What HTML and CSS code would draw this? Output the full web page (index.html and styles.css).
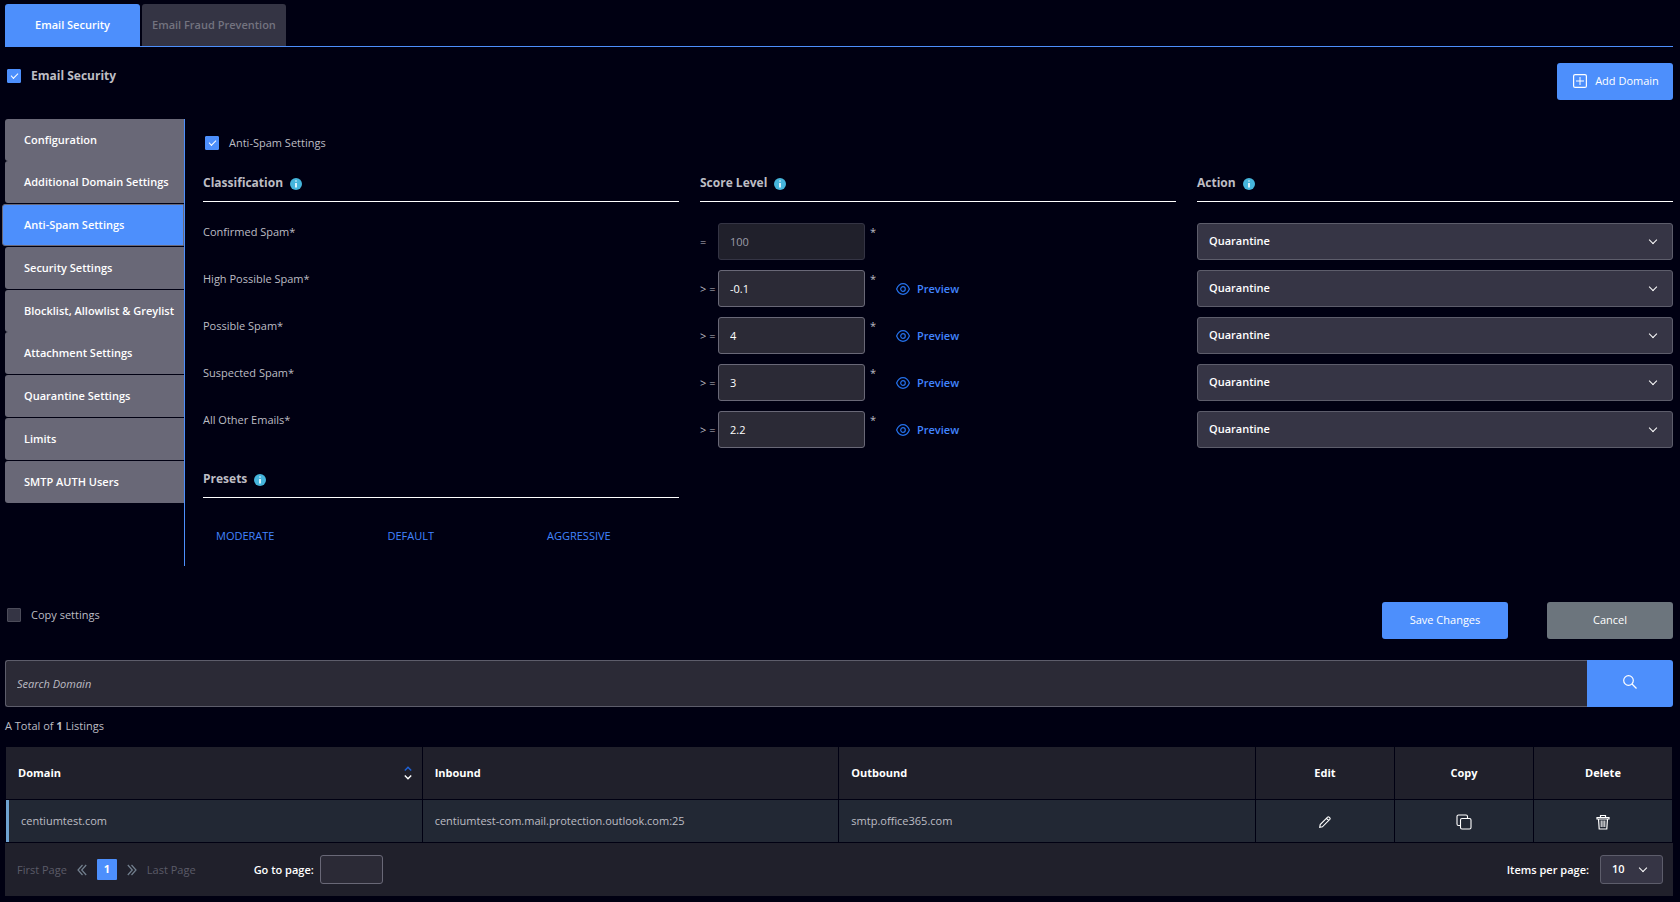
FILE: index.html
```html
<!DOCTYPE html>
<html lang="en">
<head>
  <meta charset="UTF-8">
  <meta name="viewport" content="width=device-width, initial-scale=1">
  <title>Email Security</title>
  <link rel="stylesheet" href="styles.css">
</head>
<body>

<!-- shared icons -->
<svg class="sprite" aria-hidden="true">
  <symbol id="icon-info" viewBox="0 0 12 12">
    <circle cx="6" cy="6" r="6" fill="#45b5dc"/>
    <path d="M5 2.5h2v1H5zM5 5h2v4.5H5z" fill="#d5f0fa"/>
  </symbol>
  <symbol id="icon-eye" viewBox="0 0 14 12">
    <path d="M.6 6C2 2.6 4.2.7 7 .7S12 2.6 13.4 6C12 9.4 9.800 11.300 7 11.300S2 9.400.6 6z" fill="none" stroke="currentColor" stroke-width="1.200"/>
    <circle cx="7" cy="6" r="2.300" fill="none" stroke="currentColor" stroke-width="1.200"/>
  </symbol>
</svg>

<nav class="tabs">
  <button class="tab active">Email Security</button>
  <button class="tab" disabled>Email Fraud Prevention</button>
</nav>

<div class="top-bar">
  <label class="check check-title"><input type="checkbox" checked> Email Security</label>
  <button class="btn btn-add">
    <svg width="14" height="14" viewBox="0 0 14 14" fill="none" stroke="currentColor"><rect x=".6" y=".6" width="12.8" height="12.8" rx="1.5" stroke-width="1.2"/><path d="M7 3v8M3 7h8"/></svg>
    Add Domain
  </button>
</div>

<main class="settings">
  <nav class="side-menu">
    <a href="#">Configuration</a>
    <a href="#">Additional Domain Settings</a>
    <a href="#" class="active">Anti-Spam Settings</a>
    <a href="#">Security Settings</a>
    <a href="#">Blocklist, Allowlist &amp; Greylist</a>
    <a href="#">Attachment Settings</a>
    <a href="#">Quarantine Settings</a>
    <a href="#">Limits</a>
    <a href="#">SMTP AUTH Users</a>
  </nav>

  <section class="panel">
    <label class="check"><input type="checkbox" checked> Anti-Spam Settings</label>

    <div class="grid head-row">
      <h2>Classification <svg class="info"><use href="#icon-info"/></svg></h2>
      <h2>Score Level <svg class="info"><use href="#icon-info"/></svg></h2>
      <h2>Action <svg class="info"><use href="#icon-info"/></svg></h2>
    </div>

    <div class="rows">
      <div class="grid">
        <label class="name" for="score1">Confirmed Spam*</label>
        <div class="score">
          <span class="op">=</span>
          <input type="text" id="score1" value="100" disabled>
          <span class="star">*</span>
        </div>
        <div class="select"><select aria-label="Confirmed Spam action"><option>Quarantine</option></select></div>
      </div>
      <div class="grid">
        <label class="name" for="score2">High Possible Spam*</label>
        <div class="score">
          <span class="op">&gt; =</span>
          <input type="text" id="score2" value="-0.1">
          <span class="star">*</span>
          <a href="#" class="preview"><svg><use href="#icon-eye"/></svg>Preview</a>
        </div>
        <div class="select"><select aria-label="High Possible Spam action"><option>Quarantine</option></select></div>
      </div>
      <div class="grid">
        <label class="name" for="score3">Possible Spam*</label>
        <div class="score">
          <span class="op">&gt; =</span>
          <input type="text" id="score3" value="4">
          <span class="star">*</span>
          <a href="#" class="preview"><svg><use href="#icon-eye"/></svg>Preview</a>
        </div>
        <div class="select"><select aria-label="Possible Spam action"><option>Quarantine</option></select></div>
      </div>
      <div class="grid">
        <label class="name" for="score4">Suspected Spam*</label>
        <div class="score">
          <span class="op">&gt; =</span>
          <input type="text" id="score4" value="3">
          <span class="star">*</span>
          <a href="#" class="preview"><svg><use href="#icon-eye"/></svg>Preview</a>
        </div>
        <div class="select"><select aria-label="Suspected Spam action"><option>Quarantine</option></select></div>
      </div>
      <div class="grid">
        <label class="name" for="score5">All Other Emails*</label>
        <div class="score">
          <span class="op">&gt; =</span>
          <input type="text" id="score5" value="2.2">
          <span class="star">*</span>
          <a href="#" class="preview"><svg><use href="#icon-eye"/></svg>Preview</a>
        </div>
        <div class="select"><select aria-label="All Other Emails action"><option>Quarantine</option></select></div>
      </div>
    </div>

    <div class="grid presets-head">
      <h2>Presets <svg class="info"><use href="#icon-info"/></svg></h2>
    </div>
    <div class="presets">
      <a href="#">MODERATE</a>
      <a href="#">DEFAULT</a>
      <a href="#">AGGRESSIVE</a>
    </div>
  </section>
</main>

<div class="actions">
  <label class="check"><input type="checkbox"> Copy settings</label>
  <div class="buttons">
    <button class="btn">Save Changes</button>
    <button class="btn btn-grey">Cancel</button>
  </div>
</div>

<form class="search">
  <input type="text" placeholder="Search Domain" aria-label="Search Domain">
  <button type="button" aria-label="Search">
    <svg width="14" height="14" viewBox="0 0 14 14" fill="none" stroke="currentColor" stroke-width="1.2"><circle cx="5.5" cy="5.5" r="4.8"/><path d="M9 9l4.5 4.5"/></svg>
  </button>
</form>

<p class="total">A Total of <b>1</b> Listings</p>

<table>
  <thead>
    <tr>
      <th>
        <div class="sort">Domain
          <svg width="8" height="14" viewBox="0 0 8 14" fill="none" stroke-width="1.4"><path d="M.8 4.5L4 1.3l3.2 3.2" stroke="#1f62d8"/><path d="M.8 9.5L4 12.7l3.2-3.2" stroke="#fff"/></svg>
        </div>
      </th>
      <th>Inbound</th>
      <th>Outbound</th>
      <th class="tool">Edit</th>
      <th class="tool">Copy</th>
      <th class="tool">Delete</th>
    </tr>
  </thead>
  <tbody>
    <tr>
      <td>centiumtest.com</td>
      <td>centiumtest-com.mail.protection.outlook.com:25</td>
      <td>smtp.office365.com</td>
      <td class="tool">
        <button aria-label="Edit"><svg width="12" height="12" viewBox="0 0 12 12" fill="none" stroke="currentColor" stroke-width="1.1"><path d="M.7 11.3l.5-2.700L8.600 1.200a1.100 1.100 0 0 1 1.500 0l.7.7a1.100 1.100 0 0 1 0 1.500L3.400 10.800zM7.500 2.300l2.200 2.200"/></svg></button>
      </td>
      <td class="tool">
        <button aria-label="Copy"><svg width="16" height="16" viewBox="0 0 16 16" fill="none" stroke="currentColor" stroke-width="1.1"><rect x="4.5" y="4.5" width="10.5" height="10.5" rx="1.5"/><path d="M4 11.5H2.500A1.500 1.500 0 0 1 1 10V2.500A1.500 1.500 0 0 1 2.500 1H10a1.500 1.500 0 0 1 1.500 1.500V4"/></svg></button>
      </td>
      <td class="tool">
        <button aria-label="Delete"><svg width="14" height="16" viewBox="0 0 14 16" fill="none" stroke="currentColor" stroke-width="1.200"><path d="M1 3.500h12v1.500H1zM4.500 3.300V1.500h5v1.800M2.500 5l.7 10h7.600l.7-10"/><path d="M5.200 6.500v6.500M7 6.500v6.500M8.800 6.500v6.500" stroke-width="1"/></svg></button>
      </td>
    </tr>
  </tbody>
</table>

<footer class="pager">
  <a href="#" class="page-end">First Page</a>
  <a href="#" class="arrow" aria-label="Previous"><svg width="10" height="12" viewBox="0 0 10 12" fill="none" stroke="currentColor" stroke-width="1.200"><path d="M5.500 1L1 6l4.500 5M9.200 1L4.700 6l4.500 5"/></svg></a>
  <a href="#" class="current">1</a>
  <a href="#" class="arrow" aria-label="Next"><svg width="10" height="12" viewBox="0 0 10 12" fill="none" stroke="currentColor" stroke-width="1.200"><path d="M.8 1l4.500 5L.8 11M4.500 1L9 6l-4.500 5"/></svg></a>
  <a href="#" class="page-end">Last Page</a>
  <label class="goto" for="goto">Go to page:</label>
  <input type="text" id="goto">
  <label class="per-page" for="per-page">Items per page:</label>
  <div class="select small"><select id="per-page"><option>10</option></select></div>
</footer>

</body>
</html>
```

FILE: styles.css
```css
* {
  box-sizing: border-box;
}
body {
  margin: 0;
  padding: 4px 7px 7px 5px;
  background: #000012;
  color: #bdbdc4;
  font-family: "Open Sans", sans-serif;
  font-size: 11px;
  line-height: 16px;
}
button, input, select {
  font: inherit;
  color: inherit;
}
button {
  cursor: pointer;
}
a {
  color: #4285ff;
  text-decoration: none;
}
svg {
  display: block;
  flex: none;
}
.sprite {
  display: none;
}

/* top tabs */
.tabs {
  display: flex;
  gap: 2px;
  border-bottom: 1px solid #4d8ffc;
}
.tab {
  height: 42px;
  padding: 0 10px;
  border: 0;
  border-radius: 3px 3px 0 0;
  background: #343444;
  color: #73737f;
  font-weight: 600;
}
.tab.active {
  min-width: 135px;
  background: #4d8ffc;
  color: #fff;
}

/* checkboxes */
.check {
  display: flex;
  align-items: center;
  gap: 10px;
}
.check input {
  appearance: none;
  position: relative;
  width: 14px;
  height: 14px;
  margin: 0;
  border: 1px solid #4c4c5a;
  border-radius: 1px;
  background: #343444;
}
.check input:checked {
  border-color: #4d8ffc;
  background: #4d8ffc;
}
.check input:checked::after {
  content: "";
  position: absolute;
  left: 3px;
  top: 3px;
  width: 6px;
  height: 3px;
  border: solid #fff;
  border-width: 0 0 1px 1px;
  transform: rotate(-45deg);
}
.check-title {
  font-size: 12px;
  font-weight: 700;
}

/* buttons */
.btn {
  width: 126px;
  height: 37px;
  padding: 0 0 2px;
  border: 0;
  border-radius: 3px;
  background: #4d8ffc;
  color: #fff;
}
.btn-grey {
  background: #6c757d;
}
.btn-add {
  display: flex;
  align-items: center;
  justify-content: center;
  gap: 8px;
  width: 116px;
  padding-left: 2px;
}

.top-bar {
  display: flex;
  justify-content: space-between;
  align-items: flex-start;
  padding: 16px 0 19px 2px;
}
.top-bar .check {
  margin-top: 5px;
}

/* settings area */
.settings {
  display: flex;
}
.side-menu {
  flex: none;
  width: 180px;
  min-height: 447px;
  border-right: 1px solid #4d8ffc;
}
.side-menu a {
  display: flex;
  align-items: center;
  height: 42px;
  margin-bottom: 1px;
  padding-left: 19px;
  border-radius: 3px 0 0 3px;
  background: #696877;
  color: #fff;
  font-weight: 600;
  white-space: nowrap;
}
.side-menu a:nth-child(4n+1) {
  margin-bottom: 0;
}
.side-menu a.active {
  margin-left: -3px;
  padding-left: 21px;
  border: 1px solid #696877;
  background: #4d8ffc;
}
.panel {
  flex: 1;
  padding: 16px 0 0 18px;
}
.panel > .check {
  padding-left: 2px;
}
.grid {
  display: grid;
  grid-template-columns: repeat(3, 1fr);
  gap: 21px;
}
.head-row {
  margin-top: 22px;
}
h2 {
  display: flex;
  align-items: center;
  gap: 7px;
  height: 29px;
  margin: 0;
  padding-bottom: 8px;
  border-bottom: 1px solid #fff;
  font-size: 12px;
  font-weight: 700;
}
.info {
  width: 12px;
  height: 12px;
  margin-top: 1px;
}
.rows {
  display: grid;
  gap: 10px;
  margin-top: 21px;
}
.name {
  padding-top: 1px;
}
.score {
  display: flex;
  align-items: center;
}
.score .op {
  width: 18px;
}
.score input, .pager input {
  width: 147px;
  height: 37px;
  padding: 0 11px;
  border: 1px solid #696877;
  border-radius: 3px;
  background: #2b2a36;
  color: #fff;
}
.score input:disabled {
  border-color: #343444;
  background: #20202b;
  color: #9b9ba6;
}
.star {
  align-self: flex-start;
  width: 31px;
  padding: 1px 0 0 5px;
}
.preview {
  display: flex;
  align-items: center;
  gap: 7px;
  font-weight: 600;
}
.preview svg {
  width: 14px;
  height: 12px;
  color: #2470ea;
}
.select {
  position: relative;
}
.select select {
  appearance: none;
  width: 100%;
  height: 37px;
  padding: 0 11px 2px;
  border: 1px solid #5d5d6b;
  border-radius: 3px;
  background: #363545;
  color: #fff;
  font-weight: 600;
}
.select::after {
  content: "";
  position: absolute;
  right: 17px;
  top: 14px;
  width: 5px;
  height: 5px;
  border: solid #fff;
  border-width: 0 1px 1px 0;
  transform: rotate(45deg);
  pointer-events: none;
}

.presets-head {
  margin-top: 21px;
}
.presets {
  display: flex;
  gap: 113px;
  padding: 30px 0 0 13px;
}

/* save / cancel */
.actions {
  display: flex;
  justify-content: space-between;
  align-items: flex-start;
  margin-top: 36px;
  padding-left: 2px;
}
.actions .check {
  margin-top: 5px;
}
.buttons {
  display: flex;
  gap: 39px;
}

/* search */
.search {
  display: flex;
  height: 47px;
  margin-top: 21px;
}
.search input {
  flex: 1;
  padding: 0 11px;
  border: 1px solid #5d5d6b;
  border-right: 0;
  border-radius: 3px 0 0 3px;
  background: #2b2a36;
}
.search input::placeholder {
  color: #bdbdc4;
  font-style: italic;
}
.search button {
  display: flex;
  align-items: center;
  justify-content: center;
  width: 86px;
  padding-bottom: 4px;
  border: 0;
  border-radius: 0 3px 3px 0;
  background: #4d8ffc;
  color: #fff;
}
.total {
  margin: 11px 0 12px;
}

/* domain table */
table {
  width: 100%;
  table-layout: fixed;
  border-collapse: separate;
  border-spacing: 1px;
}
th, td {
  height: 42px;
  padding: 0 12px;
  background: #222834;
  text-align: left;
}
th {
  height: 52px;
  background: #20202b;
  color: #fff;
  font-weight: 700;
}
td:first-child {
  border-left: 3px solid #6ea3d4;
}
.tool {
  width: 138px;
  text-align: center;
}
.tool button {
  padding: 0;
  border: 0;
  background: none;
  color: #fff;
  vertical-align: middle;
}
.sort {
  display: flex;
  justify-content: space-between;
  align-items: center;
  margin-right: -2px;
}

/* pager */
.pager {
  display: flex;
  align-items: center;
  height: 53px;
  padding: 0 10px 0 12px;
  background: #20202b;
}
.page-end {
  color: #5b5b68;
}
.arrow {
  margin: 0 10px;
  color: #73808f;
}
.current {
  width: 20px;
  height: 21px;
  border-radius: 1px;
  background: #4d8ffc;
  color: #fff;
  font-weight: 700;
  line-height: 20px;
  text-align: center;
}
.pager label {
  color: #fff;
  font-weight: 600;
}
.pager input {
  width: 63px;
  height: 29px;
}
.goto {
  margin: 0 6px 0 58px;
}
.per-page {
  margin: 0 11px 0 auto;
}
.select.small {
  width: 63px;
}
.small select {
  height: 29px;
  padding-bottom: 1px;
}
.select.small::after {
  top: 10px;
}
```
